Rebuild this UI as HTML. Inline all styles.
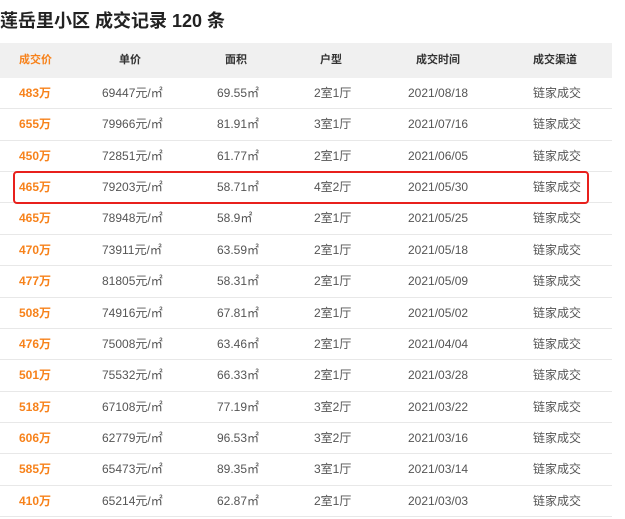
<!DOCTYPE html><html><head><meta charset="utf-8"><style>
body{margin:0;width:625px;height:519px;background:#fff;font-family:"Liberation Sans","Noto Sans CJK SC",sans-serif;position:relative;overflow:hidden}
.t{position:absolute;left:0;top:7px;font-size:18px;font-weight:bold;color:#222;white-space:nowrap}
.hd{position:absolute;left:0;top:43px;width:612px;height:35px;background:#f0f0f0}
.hd span{position:absolute;top:0;line-height:35px;font-size:11px;font-weight:bold;color:#333}
.r{position:absolute;left:0;width:612px;height:31.36px;border-bottom:1px solid #e8e8e8;box-sizing:border-box;font-size:12px;color:#555}
.r span{position:absolute;top:0;line-height:31px;height:31px;white-space:nowrap}
.r .p{color:#f7821b;font-weight:bold}
.box{position:absolute;left:13px;top:171px;width:576px;height:33px;border:2px solid #e8201c;border-radius:4px;box-sizing:border-box}
</style></head><body>
<div class="t">莲岳里小区 成交记录 120 条</div>
<div class="hd"><span style="left:19px;color:#f7821b">成交价</span><span style="left:119px">单价</span><span style="left:225px">面积</span><span style="left:320px">户型</span><span style="left:416px">成交时间</span><span style="left:533px">成交渠道</span></div>
<div class="r" style="top:78px"><span class="p" style="left:19px">483万</span><span style="left:102px">69447元/㎡</span><span style="left:217px">69.55㎡</span><span style="left:314px">2室1厅</span><span style="left:408px">2021/08/18</span><span style="left:533px">链家成交</span></div>
<div class="r" style="top:109.4px"><span class="p" style="left:19px">655万</span><span style="left:102px">79966元/㎡</span><span style="left:217px">81.91㎡</span><span style="left:314px">3室1厅</span><span style="left:408px">2021/07/16</span><span style="left:533px">链家成交</span></div>
<div class="r" style="top:140.7px"><span class="p" style="left:19px">450万</span><span style="left:102px">72851元/㎡</span><span style="left:217px">61.77㎡</span><span style="left:314px">2室1厅</span><span style="left:408px">2021/06/05</span><span style="left:533px">链家成交</span></div>
<div class="r" style="top:172.1px"><span class="p" style="left:19px">465万</span><span style="left:102px">79203元/㎡</span><span style="left:217px">58.71㎡</span><span style="left:314px">4室2厅</span><span style="left:408px">2021/05/30</span><span style="left:533px">链家成交</span></div>
<div class="r" style="top:203.4px"><span class="p" style="left:19px">465万</span><span style="left:102px">78948元/㎡</span><span style="left:217px">58.9㎡</span><span style="left:314px">2室1厅</span><span style="left:408px">2021/05/25</span><span style="left:533px">链家成交</span></div>
<div class="r" style="top:234.8px"><span class="p" style="left:19px">470万</span><span style="left:102px">73911元/㎡</span><span style="left:217px">63.59㎡</span><span style="left:314px">2室1厅</span><span style="left:408px">2021/05/18</span><span style="left:533px">链家成交</span></div>
<div class="r" style="top:266.2px"><span class="p" style="left:19px">477万</span><span style="left:102px">81805元/㎡</span><span style="left:217px">58.31㎡</span><span style="left:314px">2室1厅</span><span style="left:408px">2021/05/09</span><span style="left:533px">链家成交</span></div>
<div class="r" style="top:297.5px"><span class="p" style="left:19px">508万</span><span style="left:102px">74916元/㎡</span><span style="left:217px">67.81㎡</span><span style="left:314px">2室1厅</span><span style="left:408px">2021/05/02</span><span style="left:533px">链家成交</span></div>
<div class="r" style="top:328.9px"><span class="p" style="left:19px">476万</span><span style="left:102px">75008元/㎡</span><span style="left:217px">63.46㎡</span><span style="left:314px">2室1厅</span><span style="left:408px">2021/04/04</span><span style="left:533px">链家成交</span></div>
<div class="r" style="top:360.2px"><span class="p" style="left:19px">501万</span><span style="left:102px">75532元/㎡</span><span style="left:217px">66.33㎡</span><span style="left:314px">2室1厅</span><span style="left:408px">2021/03/28</span><span style="left:533px">链家成交</span></div>
<div class="r" style="top:391.6px"><span class="p" style="left:19px">518万</span><span style="left:102px">67108元/㎡</span><span style="left:217px">77.19㎡</span><span style="left:314px">3室2厅</span><span style="left:408px">2021/03/22</span><span style="left:533px">链家成交</span></div>
<div class="r" style="top:423px"><span class="p" style="left:19px">606万</span><span style="left:102px">62779元/㎡</span><span style="left:217px">96.53㎡</span><span style="left:314px">3室2厅</span><span style="left:408px">2021/03/16</span><span style="left:533px">链家成交</span></div>
<div class="r" style="top:454.3px"><span class="p" style="left:19px">585万</span><span style="left:102px">65473元/㎡</span><span style="left:217px">89.35㎡</span><span style="left:314px">3室1厅</span><span style="left:408px">2021/03/14</span><span style="left:533px">链家成交</span></div>
<div class="r" style="top:485.7px"><span class="p" style="left:19px">410万</span><span style="left:102px">65214元/㎡</span><span style="left:217px">62.87㎡</span><span style="left:314px">2室1厅</span><span style="left:408px">2021/03/03</span><span style="left:533px">链家成交</span></div>
<div class="box"></div>
</body></html>
